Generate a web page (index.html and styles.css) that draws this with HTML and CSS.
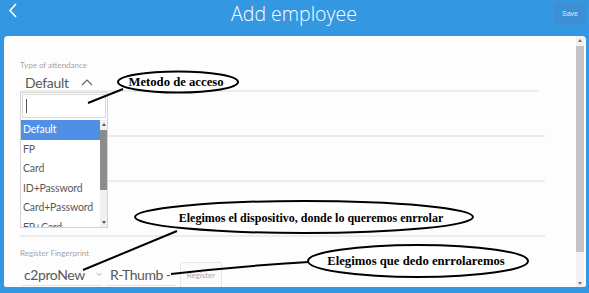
FILE: index.html
```html
<!DOCTYPE html>
<html lang="en">
<head>
    <meta charset="UTF-8">
    <meta name="viewport" content="width=device-width, initial-scale=1.0">
    <title>Add employee</title>
    <link rel="stylesheet" href="styles.css">
</head>
<body>
    <!-- Top bar -->
    <header class="topbar">
        <svg class="back" width="20" height="22" viewBox="0 0 20 22">
            <polyline points="16,4 10,10.5 16,17" fill="none" stroke="#fff" stroke-width="1.6"/>
        </svg>
        <h1>Add employee</h1>
        <button class="save">Save</button>
    </header>

    <!-- Form panel -->
    <main class="panel">
        <div class="content">
            <div class="row row-first">
                <div class="label">Type of attendance</div>
                <div class="select">
                    <span>Default</span>
                    <svg width="12" height="8" viewBox="0 0 12 8"><polyline points="1,7 6,2 11,7" fill="none" stroke="#666" stroke-width="1.2"/></svg>
                </div>
            </div>
            <div class="row row-mid"></div>
            <div class="row row-mid"></div>
            <div class="row row-last"></div>

            <div class="register">
                <div class="label">Register Fingerprint</div>
                <div class="controls">
                    <div class="field device">
                        <span>c2proNew</span>
                        <svg width="10" height="7" viewBox="0 0 10 7"><polyline points="1,1 5,5 9,1" fill="none" stroke="#888" stroke-width="1.1"/></svg>
                    </div>
                    <div class="field finger"><span>R-Thumb -</span></div>
                    <button class="register-btn">Register</button>
                </div>
            </div>
        </div>

        <div class="scrollbar">
            <div class="arrow up"></div>
            <div class="thumb"></div>
            <div class="arrow down"></div>
        </div>
    </main>

    <!-- Open dropdown of "Type of attendance" -->
    <div class="dropdown">
        <div class="search"><span class="caret"></span></div>
        <div class="list-wrap">
            <ul class="options">
                <li class="active">Default</li>
                <li>FP</li>
                <li>Card</li>
                <li>ID+Password</li>
                <li>Card+Password</li>
                <li>FP+Card</li>
            </ul>
            <div class="mini-scroll">
                <div class="mini-arrow up"></div>
                <div class="mini-thumb"></div>
                <div class="mini-arrow down"></div>
            </div>
        </div>
    </div>

    <!-- Annotations drawn over the screenshot -->
    <svg class="notes" width="589" height="293" viewBox="0 0 589 293">
        <g fill="none" stroke="#000" stroke-width="2">
            <line x1="88" y1="103" x2="123" y2="89"/>
            <ellipse cx="178" cy="82" rx="60" ry="10.5" fill="#fff"/>
            <line x1="83" y1="270" x2="177" y2="231"/>
            <ellipse cx="304" cy="217" rx="169" ry="16" fill="#fff"/>
            <path d="M171 274 Q240 266 309 262"/>
            <ellipse cx="418" cy="261" rx="110" ry="16" fill="#fff"/>
        </g>
        <g class="note-text">
            <text class="big" x="176" y="86" text-anchor="middle">Metodo de acceso</text>
            <text x="311" y="222" text-anchor="middle">Elegimos el dispositivo, donde lo queremos enrrolar</text>
            <text class="big" x="416" y="265" text-anchor="middle">Elegimos que dedo enrrolaremos</text>
        </g>
    </svg>
</body>
</html>
```

FILE: styles.css
```css
/* Basic Styling */
body {
    margin: 0;
    padding: 0;
    width: 589px;
    height: 293px;
    overflow: hidden;
    background-color: #3497e2;
    font-family: Lato, "Noto Sans", sans-serif;
    position: relative;
}

.topbar {
    height: 36px;
    display: flex;
    align-items: flex-start;
}

.topbar h1 {
    flex: 1;
    margin: 0;
    text-align: center;
    color: #fff;
    font-family: "Open Sans", sans-serif;
    font-weight: 300;
    font-size: 19.5px;
    line-height: 27px;
    padding-left: 14px;
}

.save {
    margin: 2px 3px 0 0;
    width: 32px;
    height: 23px;
    border: none;
    border-radius: 2px;
    background-color: #3d8fd6;
    color: #dbe9f7;
    font-size: 7px;
    padding: 0;
}

.panel {
    margin: 0 3px 0 4px;
    height: 251px;
    background-color: #fdfdfe;
    border-radius: 4px 4px 2px 2px;
    display: flex;
    overflow: hidden;
}

.content {
    flex: 1;
    padding: 0 31px 0 16px;
}

.row {
    border-bottom: 2px solid #ececec;
}

.row-first {
    padding-top: 24px;
    box-sizing: border-box;
    height: 56px;
    margin-right: 6px;
}

.row-mid {
    height: 43px;
}

.row-last {
    height: 53px;
}

.label {
    font-size: 8px;
    line-height: 10px;
    color: #a5a5a5;
    white-space: nowrap;
}

.select {
    display: flex;
    align-items: center;
    gap: 12px;
    padding: 2px 0 0 5px;
    height: 20px;
    font-size: 14px;
    letter-spacing: -0.3px;
    color: #585858;
}

.register {
    padding-top: 11px;
}

.controls {
    display: flex;
    gap: 4px;
    height: 25px;
    margin-top: 4px;
    padding-left: 2px;
}

.field {
    display: flex;
    align-items: center;
    height: 24px;
    padding-top: 1px;
    border-bottom: 1px solid #e4e4e4;
    font-size: 14px;
    letter-spacing: -0.4px;
    color: #585858;
    box-sizing: border-box;
    white-space: nowrap;
}

.device {
    width: 80px;
    padding-left: 2px;
}

.device svg {
    margin-left: 11px;
}

.finger {
    width: 70px;
    padding-left: 4px;
    letter-spacing: -0.5px;
}

.register-btn {
    width: 42px;
    height: 26px;
    margin: 0;
    border: 1px solid #e6e6e6;
    border-radius: 2px;
    background-color: #fbfbfb;
    color: #a8a8a8;
    font-family: Lato, sans-serif;
    font-size: 8px;
    padding: 0;
}

.scrollbar {
    width: 8px;
    margin: 0 2px 0 0;
    background-color: #f1f1f1;
    display: flex;
    flex-direction: column;
    align-items: center;
}

.arrow {
    width: 0;
    height: 0;
    border-left: 2px solid transparent;
    border-right: 2px solid transparent;
}

.arrow.up {
    margin-top: 3px;
    border-bottom: 3px solid #777;
}

.arrow.down {
    margin-top: auto;
    margin-bottom: 2px;
    border-top: 3px solid #777;
}

.thumb {
    margin-top: 4px;
    width: 8px;
    height: 206px;
    background-color: #c4c4c4;
}

/* Dropdown popup */
.dropdown {
    position: absolute;
    left: 20px;
    top: 92px;
    width: 88px;
    height: 136px;
    box-sizing: border-box;
    border: 1px solid #d3d3d3;
    background-color: #fff;
    display: flex;
    flex-direction: column;
}

.search {
    margin: 1px 1px 2px 1px;
    height: 24px;
    border: 1px solid #d8d8d8;
    box-sizing: border-box;
    padding: 4px 3px;
}

.caret {
    display: block;
    width: 1px;
    height: 14px;
    background-color: #555;
}

.list-wrap {
    flex: 1;
    display: flex;
    overflow: hidden;
}

.options {
    list-style-type: none;
    margin: 0;
    padding: 0;
    flex: 1;
}

.options li {
    height: 19.5px;
    line-height: 19.5px;
    padding-left: 2px;
    font-size: 10.5px;
    letter-spacing: -0.15px;
    color: #5a5a5a;
    white-space: nowrap;
}

.options li.active {
    background-color: #4f90e6;
    color: #fff;
}

.mini-scroll {
    width: 7px;
    background-color: #f0f0f0;
    display: flex;
    flex-direction: column;
    align-items: center;
}

.mini-arrow {
    width: 0;
    height: 0;
    border-left: 2px solid transparent;
    border-right: 2px solid transparent;
}

.mini-arrow.up {
    margin-top: 3px;
    border-bottom: 3px solid #555;
}

.mini-arrow.down {
    margin-top: auto;
    margin-bottom: 3px;
    border-top: 3px solid #555;
}

.mini-thumb {
    margin-top: 4px;
    width: 7px;
    height: 60px;
    background-color: #8c8c8c;
}

/* Annotation overlay */
.notes {
    position: absolute;
    left: 0;
    top: 0;
    pointer-events: none;
}

.note-text {
    font-family: "Liberation Serif", "Times New Roman", serif;
    font-weight: bold;
    font-size: 12px;
    fill: #000;
}

.note-text .big {
    font-size: 12.7px;
}
```
